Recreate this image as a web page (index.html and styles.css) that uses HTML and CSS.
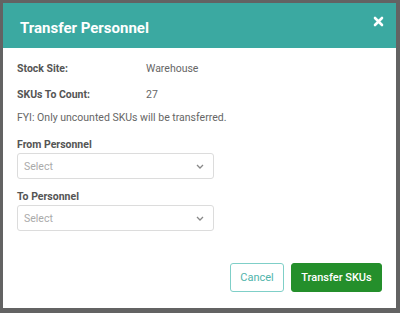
FILE: index.html
```html
<!DOCTYPE html>
<html lang="en">
<head>
    <meta charset="UTF-8">
    <title>Transfer Personnel</title>
    <link rel="stylesheet" href="styles.css">
</head>
<body>
    <div class="backdrop">
        <div class="modal">
            <div class="modal-header">
                <h3>Transfer Personnel</h3>
                <svg class="close" width="11" height="11" viewBox="0 0 11 11"><path d="M2 2l7 7M9 2l-7 7" stroke="#fff" stroke-width="2.6" stroke-linecap="round"/></svg>
            </div>
            <div class="modal-body">
                <div class="info-row">
                    <span class="info-label">Stock Site:</span>
                    <span class="info-value">Warehouse</span>
                </div>
                <div class="info-row">
                    <span class="info-label">SKUs To Count:</span>
                    <span class="info-value">27</span>
                </div>
                <p class="note">FYI: Only uncounted SKUs will be transferred.</p>

                <label class="field-label">From Personnel</label>
                <div class="select">
                    <span>Select</span>
                    <svg width="8" height="5" viewBox="0 0 8 5"><path d="M1 1l3 3 3-3" fill="none" stroke="#888" stroke-width="1.3"/></svg>
                </div>

                <label class="field-label to">To Personnel</label>
                <div class="select">
                    <span>Select</span>
                    <svg width="8" height="5" viewBox="0 0 8 5"><path d="M1 1l3 3 3-3" fill="none" stroke="#888" stroke-width="1.3"/></svg>
                </div>
            </div>
            <div class="modal-footer">
                <button class="btn btn-cancel">Cancel</button>
                <button class="btn btn-primary">Transfer SKUs</button>
            </div>
        </div>
    </div>
</body>
</html>
```

FILE: styles.css
```css
body {
    margin: 0;
    font-family: Roboto, "Liberation Sans", sans-serif;
    background-color: #636363;
}
.backdrop {
    width: 400px;
    height: 313px;
    padding: 3px 4px 5px 3px;
    box-sizing: border-box;
}
.modal {
    height: 305px;
    background: #fff;
    display: flex;
    flex-direction: column;
}
.modal-header {
    height: 45px;
    background-color: #3ba9a1;
    display: flex;
    align-items: center;
    justify-content: space-between;
    padding: 0 12px 0 17px;
}
.modal-header h3 {
    margin: 0;
    margin-top: 4px;
    color: #fff;
    font-size: 15px;
    font-weight: 700;
}
.close {
    margin-top: -8px;
}
.modal-body {
    flex: 1;
    padding: 13px 14px 0 14px;
    display: flex;
    flex-direction: column;
    align-items: flex-start;
    color: #555;
    font-size: 10.5px;
}
.info-row {
    display: flex;
    height: 16px;
    line-height: 16px;
    margin-bottom: 10px;
}
.info-label {
    width: 129px;
    font-weight: 700;
}
.info-value {
    color: #666;
}
.note {
    margin: -3px 0 0 0;
    line-height: 16px;
    color: #666;
}
.field-label {
    margin-top: 11px;
    line-height: 16px;
    font-weight: 700;
}
.field-label.to {
    margin-top: 10px;
}
.select {
    width: 197px;
    height: 26px;
    border: 1px solid #dcdcdc;
    border-radius: 3px;
    display: flex;
    align-items: center;
    justify-content: space-between;
    padding: 0 9px 0 6px;
    box-sizing: border-box;
    color: #aaa;
}
.modal-footer {
    display: flex;
    justify-content: flex-end;
    gap: 7px;
    padding: 0 14px 16px 0;
}
.btn {
    height: 29px;
    border-radius: 3px;
    font-family: Roboto, "Liberation Sans", sans-serif;
    font-size: 11px;
    cursor: pointer;
}
.btn-cancel {
    width: 54px;
    background: #fff;
    border: 1px solid #7fcfc8;
    color: #4fb4ab;
}
.btn-primary {
    width: 91px;
    background: #248f2b;
    border: 1px solid #248f2b;
    color: #fff;
    font-weight: 500;
}
```
